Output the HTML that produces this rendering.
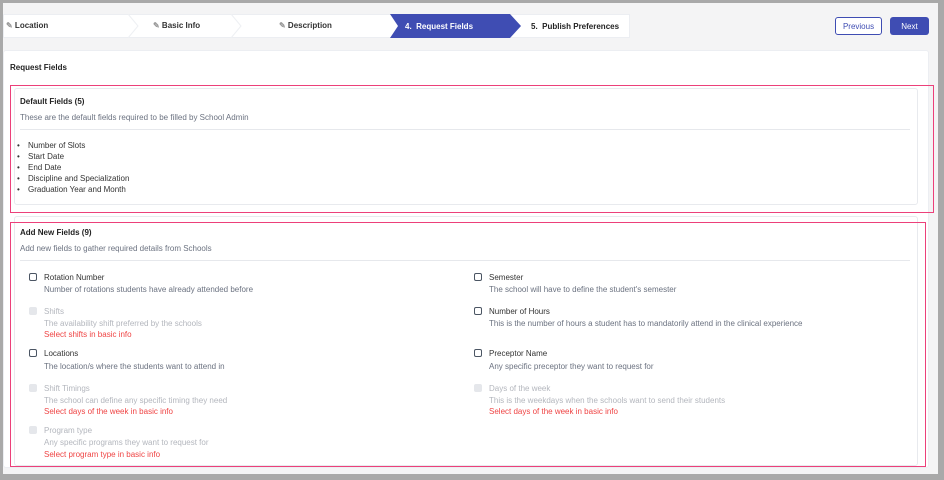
<!DOCTYPE html><html><head><style>
*{margin:0;padding:0;box-sizing:border-box}
body{width:944px;height:480px;background:#a9a9a9;font-family:"Liberation Sans",sans-serif;position:relative;overflow:hidden}
.a{position:absolute;white-space:nowrap}
#pg{position:absolute;left:3px;top:3px;width:935px;height:471px;background:#f4f4f5}
.t{font-size:8px;color:#333}
.b{font-weight:bold;color:#222}
.g{color:#6b7280}
.d{color:#b3b6bd}
.r{color:#ef4444}
.cb{position:absolute;width:8px;height:8px;border:1.3px solid #4b5563;border-radius:2px;background:#fff}
.cb.x{border:none;background:#e5e7eb}
.btn{display:flex;align-items:center;justify-content:center;font-size:8px;border-radius:3px}
</style></head><body>
<div id="pg"></div>
<div class="a" style="left:3px;top:14px;width:627px;height:24px;background:#fff;border:1px solid #eceef2"></div>
<svg class="a" style="left:3px;top:14px" width="630" height="24">
<polyline points="125,0 135,12 125,24" fill="none" stroke="#eef0f3"/>
<polyline points="228,0 238,12 228,24" fill="none" stroke="#eef0f3"/>
<polygon points="387,0 507,0 518,12 507,24 387,24 395,12" fill="#3f4db3"/>
</svg>
<div class="a t" style="left:6px;top:21px;font-weight:bold;color:#333"><span style="color:#999">✎</span> Location</div>
<div class="a t" style="left:153px;top:21px;font-weight:bold;color:#333"><span style="color:#999">✎</span> Basic Info</div>
<div class="a t" style="left:279px;top:21px;font-weight:bold;color:#333"><span style="color:#999">✎</span> Description</div>
<div class="a t" style="left:405px;top:22px;font-weight:bold;color:#fff">4.&nbsp; Request Fields</div>
<div class="a t" style="left:531px;top:22px;font-weight:bold;color:#222">5.&nbsp; Publish Preferences</div>
<div class="a btn" style="left:835px;top:17px;width:47px;height:18px;border:1px solid #3f4db3;background:#fff;color:#3f4db3">Previous</div>
<div class="a btn" style="left:890px;top:17px;width:39px;height:18px;background:#3f4db3;color:#fff">Next</div>
<div class="a" style="left:3px;top:50px;width:926px;height:418px;background:#fff;border:1px solid #eceef2;border-radius:3px"></div>
<div class="a t b" style="left:10px;top:63px">Request Fields</div>
<div class="a" style="left:14px;top:88px;width:904px;height:117px;border:1px solid #e8eaee;border-radius:3px"></div>
<div class="a" style="left:10px;top:85px;width:924px;height:128px;border:1.5px solid #ec407a"></div>
<div class="a t b" style="left:20px;top:97px">Default Fields (5)</div>
<div class="a t g" style="left:20px;top:113px">These are the default fields required to be filled by School Admin</div>
<div class="a" style="left:20px;top:129px;width:890px;height:1px;background:#e6e8ec"></div>
<div class="a t" style="left:17px;top:140px;line-height:11px">•<br>•<br>•<br>•<br>•</div>
<div class="a t" style="left:28px;top:140px;line-height:11px">Number of Slots<br>Start Date<br>End Date<br>Discipline and Specialization<br>Graduation Year and Month</div>
<div class="a" style="left:14px;top:216px;width:904px;height:250px;border:1px solid #e8eaee;border-radius:3px"></div>
<div class="a" style="left:10px;top:222px;width:916px;height:245px;border:1.5px solid #ec407a"></div>
<div class="a t b" style="left:20px;top:228px">Add New Fields (9)</div>
<div class="a t g" style="left:20px;top:244px">Add new fields to gather required details from Schools</div>
<div class="a" style="left:20px;top:260px;width:890px;height:1px;background:#e6e8ec"></div>

<div class="cb" style="left:29px;top:273px"></div>
<div class="a t" style="left:44px;top:273px">Rotation Number</div>
<div class="a t g" style="left:44px;top:285px">Number of rotations students have already attended before</div>
<div class="cb x" style="left:29px;top:307px"></div>
<div class="a t d" style="left:44px;top:307px">Shifts</div>
<div class="a t d" style="left:44px;top:319px">The availability shift preferred by the schools</div>
<div class="a t r" style="left:44px;top:330px">Select shifts in basic info</div>
<div class="cb" style="left:29px;top:349px"></div>
<div class="a t" style="left:44px;top:349px">Locations</div>
<div class="a t g" style="left:44px;top:362px">The location/s where the students want to attend in</div>
<div class="cb x" style="left:29px;top:384px"></div>
<div class="a t d" style="left:44px;top:384px">Shift Timings</div>
<div class="a t d" style="left:44px;top:396px">The school can define any specific timing they need</div>
<div class="a t r" style="left:44px;top:407px">Select days of the week in basic info</div>
<div class="cb x" style="left:29px;top:426px"></div>
<div class="a t d" style="left:44px;top:426px">Program type</div>
<div class="a t d" style="left:44px;top:438px">Any specific programs they want to request for</div>
<div class="a t r" style="left:44px;top:450px">Select program type in basic info</div>

<div class="cb" style="left:474px;top:273px"></div>
<div class="a t" style="left:489px;top:273px">Semester</div>
<div class="a t g" style="left:489px;top:285px">The school will have to define the student's semester</div>
<div class="cb" style="left:474px;top:307px"></div>
<div class="a t" style="left:489px;top:307px">Number of Hours</div>
<div class="a t g" style="left:489px;top:319px">This is the number of hours a student has to mandatorily attend in the clinical experience</div>
<div class="cb" style="left:474px;top:349px"></div>
<div class="a t" style="left:489px;top:349px">Preceptor Name</div>
<div class="a t g" style="left:489px;top:362px">Any specific preceptor they want to request for</div>
<div class="cb x" style="left:474px;top:384px"></div>
<div class="a t d" style="left:489px;top:384px">Days of the week</div>
<div class="a t d" style="left:489px;top:396px">This is the weekdays when the schools want to send their students</div>
<div class="a t r" style="left:489px;top:407px">Select days of the week in basic info</div>
</body></html>
